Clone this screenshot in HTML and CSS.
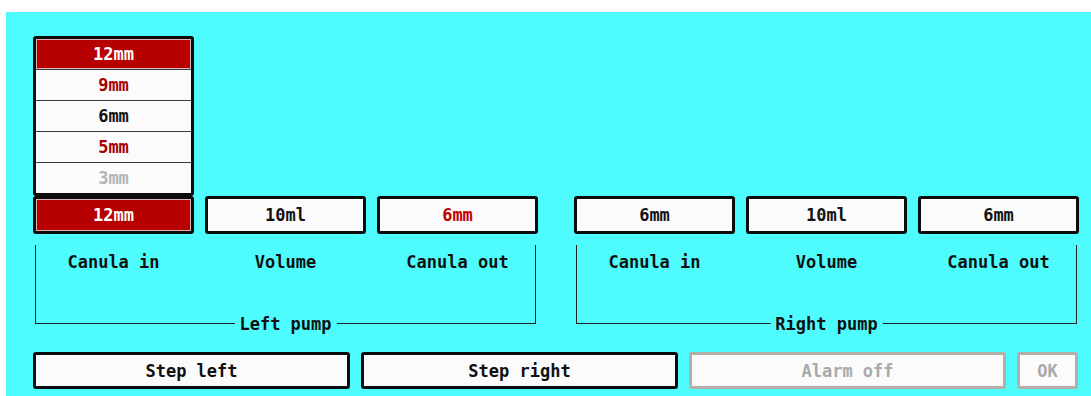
FILE: index.html
```html
<!DOCTYPE html>
<html lang="en">

<head>
    <meta charset="UTF-8">
    <meta name="viewport" content="width=device-width, initial-scale=1.0">
    <title>Pump setup</title>
    <link rel="stylesheet" href="styles.css">
</head>

<body>
    <div class="screen">
        <div class="pumps">
            <div class="pump">
                <div class="fields">
                    <div class="field field-selected">
                        <ul class="dropdown">
                            <li class="option option-active">12mm</li>
                            <li class="option option-red">9mm</li>
                            <li class="option">6mm</li>
                            <li class="option option-red">5mm</li>
                            <li class="option option-disabled">3mm</li>
                        </ul>
                        <span>12mm</span>
                    </div>
                    <div class="field"><span>10ml</span></div>
                    <div class="field field-red"><span>6mm</span></div>
                </div>
                <div class="group">
                    <div class="captions">
                        <span>Canula in</span>
                        <span>Volume</span>
                        <span>Canula out</span>
                    </div>
                    <span class="legend">Left pump</span>
                </div>
            </div>

            <div class="pump">
                <div class="fields">
                    <div class="field"><span>6mm</span></div>
                    <div class="field"><span>10ml</span></div>
                    <div class="field"><span>6mm</span></div>
                </div>
                <div class="group">
                    <div class="captions">
                        <span>Canula in</span>
                        <span>Volume</span>
                        <span>Canula out</span>
                    </div>
                    <span class="legend">Right pump</span>
                </div>
            </div>
        </div>

        <div class="actions">
            <button type="button" class="btn btn-wide">Step left</button>
            <button type="button" class="btn btn-wide">Step right</button>
            <button type="button" class="btn btn-wide" disabled>Alarm off</button>
            <button type="button" class="btn btn-ok" disabled>OK</button>
        </div>
    </div>
</body>

</html>
```

FILE: styles.css
```css
html,
body {
    margin: 0;
    height: 100%;
    background-color: #ffffff;
}

body {
    padding: 12px 0 0 6px;
    box-sizing: border-box;
    font-family: "DejaVu Sans Mono", "Liberation Mono", monospace;
    font-weight: bold;
    font-size: 17px;
    color: #111;
}

.screen {
    height: 100%;
    background-color: #4efcfd;
    padding: 184px 0 0 27px;
    box-sizing: border-box;
}

.pumps {
    display: flex;
    gap: 36px;
}

.pump {
    width: 505px;
}

.fields {
    display: flex;
    justify-content: space-between;
}

.field {
    position: relative;
    width: 161px;
    height: 38px;
    box-sizing: border-box;
    border: 3px solid #0c0c0c;
    border-radius: 3px;
    background-color: #fbfbfb;
    display: flex;
    align-items: center;
    justify-content: center;
    line-height: 1;
}

.field-selected {
    background-color: #b70000;
    color: #ffffff;
    box-shadow: inset 0 0 0 1px #d9b4b4;
}

.field-red {
    color: #c40000;
}

.dropdown {
    position: absolute;
    left: -3px;
    right: -3px;
    bottom: calc(100% + 3px);
    margin: 0;
    padding: 0;
    list-style: none;
    border: 3px solid #0c0c0c;
    border-radius: 3px;
    background-color: #fbfbfb;
}

.option {
    height: 30px;
    display: flex;
    align-items: center;
    justify-content: center;
    color: #111;
    border-top: 1px solid #3a3a3a;
}

.option:first-child {
    border-top: none;
}

.option-active {
    background-color: #b70000;
    color: #ffffff;
    box-shadow: inset 0 0 0 1px #d9b4b4;
}

.option-red {
    color: #a50000;
}

.option-disabled {
    color: #b4b4b4;
}

.group {
    position: relative;
    height: 79px;
    margin: 11px 2px 0;
    box-sizing: border-box;
    border: 1px solid #222;
    border-top: none;
}

.captions {
    display: flex;
    justify-content: space-between;
    margin: 0 -3px;
    padding-top: 7px;
}

.captions span {
    width: 161px;
    text-align: center;
}

.legend {
    position: absolute;
    left: 50%;
    bottom: -10px;
    transform: translateX(-50%);
    padding: 0 5px;
    background-color: #4efcfd;
    line-height: 18px;
}

.actions {
    display: flex;
    gap: 11px;
    margin-top: 28px;
}

.btn {
    height: 37px;
    box-sizing: border-box;
    border: 3px solid #0c0c0c;
    border-radius: 3px;
    background-color: #fbfbfb;
    font: inherit;
    color: #111;
    padding: 0;
    cursor: pointer;
}

.btn-wide {
    width: 317px;
}

.btn-ok {
    width: 61px;
}

.btn:disabled {
    border-color: #b3afa7;
    color: #a9a9a9;
    cursor: default;
}
```
